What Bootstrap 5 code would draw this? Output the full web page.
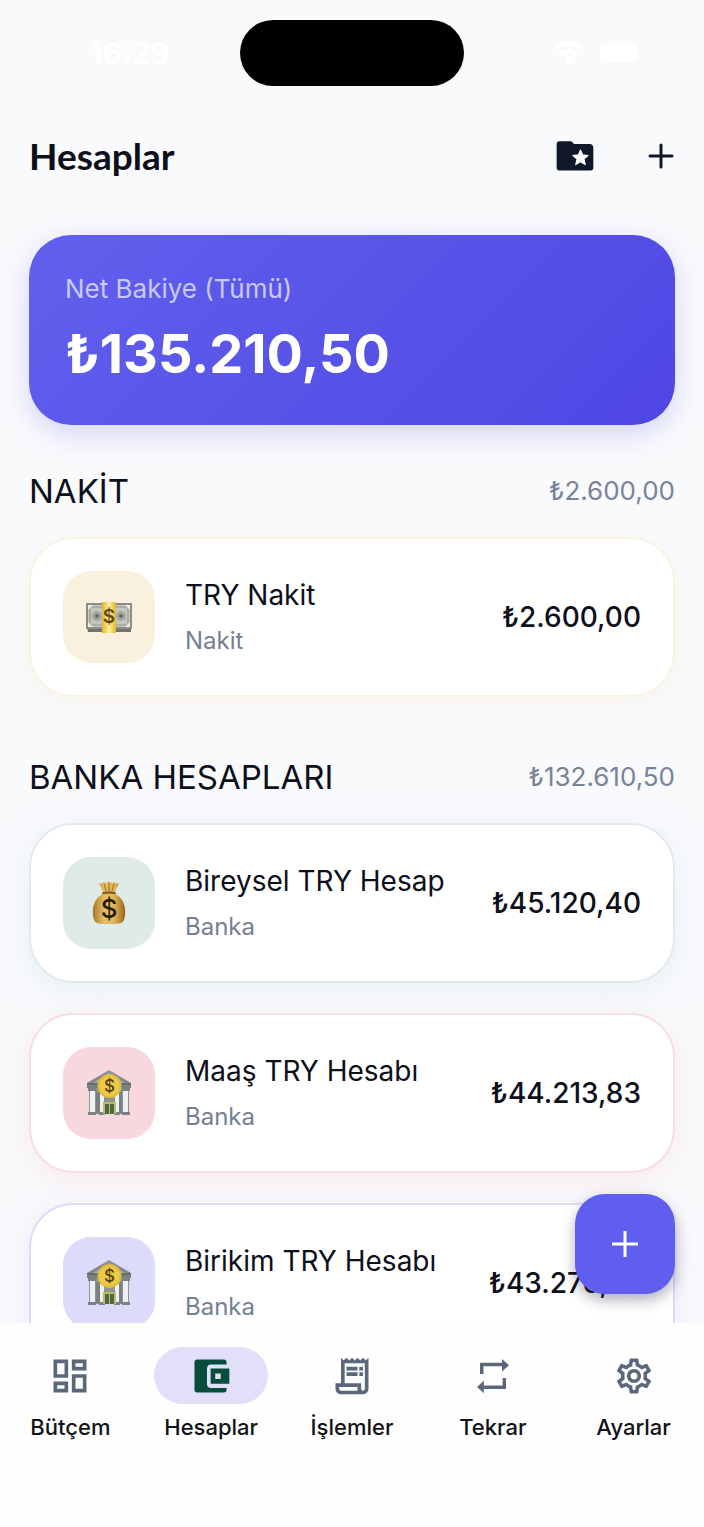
<!DOCTYPE html>
<html lang="tr">
<head>
<meta charset="utf-8">
<meta name="viewport" content="width=device-width, initial-scale=1">
<title>Hesaplar</title>
<link href="https://cdn.jsdelivr.net/npm/bootstrap@5.3.0/dist/css/bootstrap.min.css" rel="stylesheet">
<style>
  body { font-family: Inter, "Noto Sans", sans-serif; background: #f9fafc; color: #0d0f1a; }
  .screen { padding: 0 29px 29px; scrollbar-width: none; }
  .screen::-webkit-scrollbar { display: none; }

  .status-bar { padding-top: 20px; color: #fff; font-size: 30px; font-weight: 600; }
  .status-bar .side { flex: 1 1 0; padding: 0 37px; }
  .island { width: 224px; height: 66px; border-radius: 33px; background: #000; }

  .top-bar { height: 60px; margin: 40px 0 49px; }
  .top-bar h1 { font-family: Lato, sans-serif; font-size: 37px; line-height: 44px; font-weight: 700; }
  .top-actions { gap: 42px; margin-right: -8px; }
  .icon-btn { width: 44px; height: 44px; color: #0f172a; }

  .hero { height: 190px; padding: 34px 36px; border-radius: 42px; color: #fff;
    background: linear-gradient(135deg, #6161ee, #5a56e8 40%, #4f46e5);
    box-shadow: 0 8px 28px rgba(99, 102, 241, .26); }
  .hero-label { font-size: 26px; line-height: 40px; color: #c9c8f9; }
  .hero-sum { font-size: 54px; line-height: 64px; margin-top: 13px; font-weight: 700; }

  .group { margin-top: 58px; }
  .group-first { margin-top: 44px; }
  .group-head { margin-bottom: 24px; line-height: 44px; }
  .group-head h2 { font-size: 33px; line-height: 44px; font-weight: 400; }
  .group-total { font-size: 26px; color: #78839a; }

  .account { --tint: #faf3e3; --tile: #f9f1de; border: 2px solid var(--tint); border-radius: 44px;
    padding: 32px; gap: 30px; background: #fff; box-shadow: 0 8px 28px var(--glow, #f8f2e688); }
  .account-tile { width: 92px; height: 92px; border-radius: 28px; background: var(--tile); }
  .account-name { font-size: 28px; line-height: 48px; font-weight: 400; }
  .account-kind { font-size: 24px; line-height: 44px; color: #748094; }
  .account-sum { font-size: 28px; font-weight: 500; }
  .mint { --tint: #e0eaed; --tile: #dfebe9; --glow: #dcebf188; }
  .rose { --tint: #f8dde2; --tile: #f8d8dc; --glow: #f8dde288; }
  .lilac { --tint: #dcdbfa; --tile: #dddbfb; --glow: #dddcfa88; }
  .account-list { gap: 30px; }

  .fab { right: 29px; bottom: 29px; width: 100px; height: 100px; border-radius: 30px; color: #fff;
    background: #5f5eee; box-shadow: 0 6px 14px rgba(30, 30, 60, .35); }

  .tabs { background: #fefefe; padding: 24px 0 85px; }
  .tabs a { color: #111318; font-size: 22px; line-height: 30px; font-weight: 500; gap: 8px; }
  .tab-icon { width: 114px; height: 57px; border-radius: 29px; color: #5b677b; }
  .active .tab-icon { background: #e2e0f8; color: #064e3b; }
  svg { display: block; }
</style>
</head>
<body>
<svg width="0" height="0" class="position-absolute" aria-hidden="true">
  <defs>
    <linearGradient id="stone" x1="0" y1="0" x2="0" y2="1"><stop offset="0" stop-color="#8f9694"/><stop offset="1" stop-color="#767d7d"/></linearGradient>
    <linearGradient id="gold" x1="0" y1="0" x2="1" y2="0"><stop offset="0" stop-color="#a9792b"/><stop offset=".35" stop-color="#e6bd62"/><stop offset=".65" stop-color="#e2b658"/><stop offset="1" stop-color="#94651f"/></linearGradient>
    <linearGradient id="band" x1="0" y1="0" x2="1" y2="0"><stop offset="0" stop-color="#e0b52e"/><stop offset=".5" stop-color="#fff09a"/><stop offset="1" stop-color="#e0b52e"/></linearGradient>
    <symbol id="bank" viewBox="0 0 48 48">
      <path d="M24 1 2 14v5h44v-5z" fill="url(#stone)"/>
      <path d="M24 4 8 14h32z" fill="#a3aaa7"/>
      <path d="M2 14h44v2H2z" fill="#666e6e"/>
      <path d="M4 19h40v26H4z" fill="#8d9594"/>
      <path d="M11 23h4v21h-4zM33 23h4v21h-4z" fill="#798182"/>
      <path d="M5 21h5v24H5zM15 21h4v24h-4zM30 21h4v24h-4zM38 21h5v24h-5z" fill="#eef0f2"/>
      <path d="M3 19h8v3H3zM14 19h6v3h-6zM29 19h6v3h-6zM37 19h8v3h-8zM3 43h8v3H3zM14 43h6v3h-6zM29 43h6v3h-6zM37 43h8v3h-8z" fill="#7c8384"/>
      <path d="M18 33h13v12H18z" fill="#c0b96b"/>
      <path d="M20 35h4v10h-4zM25 35h4v10h-4z" fill="#4c6845"/>
      <circle cx="24.500" cy="17" r="12" fill="#e3bd38"/><circle cx="24.500" cy="17" r="10" fill="#ebca4b"/>
      <text x="24.500" y="23" text-anchor="middle" font-size="17" font-weight="500" fill="#55400f">$</text>
    </symbol>
    <symbol id="cash" viewBox="0 0 48 48">
      <path d="M2 35h44v4H3z" fill="#73736d"/>
      <path d="M1 10h46v26H1z" fill="#8c8d86"/>
      <path d="M3 12h42v22H3z" fill="#c4c5bd"/>
      <path d="M5 14h38v18H5z" fill="none" stroke="#96978e"/>
      <circle cx="12" cy="23" r="5" fill="#a5a69e"/><circle cx="12" cy="23" r="2" fill="#686961"/>
      <circle cx="36" cy="23" r="5" fill="#a5a69e"/><circle cx="36" cy="23" r="2" fill="#686961"/>
      <path d="M3 12h5l-5 5zM45 12h-5l5 5zM3 34h5l-5-5zM45 34h-5l5-5z" fill="#eeeee7"/>
      <path d="M17 9h14v31H17z" fill="url(#band)"/>
      <text x="24" y="30" text-anchor="middle" font-size="19" font-weight="600" fill="#5f4610">$</text>
    </symbol>
    <symbol id="bag" viewBox="0 0 48 48">
      <path d="M13 3q3 2 5-1 3 2 6-1 3 3 6 1 2 3 5 1-4 5-5 11 11 6 11 19 0 11-5 12-12 2-24 0-5-1-5-12 0-13 11-19-1-6-5-11z" fill="url(#gold)"/>
      <path d="M17 14q7-2 14 0" fill="none" stroke="#7b521b" stroke-width="2"/>
      <path d="m19 4 2 8m3-9v9m5-8-2 8" stroke="#92682a" fill="none"/>
      <text x="24" y="40" text-anchor="middle" font-size="27" font-weight="500" fill="#251905">$</text>
    </symbol>
  </defs>
</svg>

<div class="vh-100 d-flex flex-column">
  <div class="position-relative flex-fill overflow-hidden">
    <main class="screen h-100 overflow-auto">
      <div class="status-bar d-flex align-items-center">
        <div class="side"><span class="ps-4">16:29</span></div>
        <div class="island"></div>
        <div class="side d-flex justify-content-end align-items-center gap-3">
          <svg width="30" height="24" viewBox="0 0 30 24" fill="none" stroke="#fff" stroke-width="4" aria-hidden="true"><path d="M2 8q13-11 26 0M7 14q8-7 16 0"/><circle cx="15" cy="19" r="2" fill="#fff"/></svg>
          <svg width="38" height="18" viewBox="0 0 38 18" aria-hidden="true"><rect width="38" height="18" rx="5" fill="#fff"/></svg>
        </div>
      </div>

      <header class="top-bar d-flex align-items-center justify-content-between">
        <h1 class="m-0">Hesaplar</h1>
        <div class="top-actions d-flex">
          <button type="button" class="icon-btn btn border-0 p-0" aria-label="Favori hesaplar">
            <svg width="44" height="44" viewBox="0 0 24 24" fill="currentColor"><path d="M20 5.500h-8.500L10 4H3.500C2.600 4 2 4.600 2 5.500v13c0 .8.600 1.400 1.400 1.400h17.200c.8 0 1.400-.6 1.400-1.400V7.500c0-1.200-.8-2-2-2z"/><path fill="#fff" stroke="#fff" stroke-width=".6" stroke-linejoin="round" d="m15 8.700 1.200 2.700 3 .3-2.300 2 .7 3-2.600-1.600-2.600 1.600.7-3-2.300-2 3-.3z"/></svg>
          </button>
          <button type="button" class="icon-btn btn border-0 p-0" aria-label="Hesap ekle">
            <svg width="44" height="44" viewBox="0 0 44 44" stroke="currentColor" stroke-width="3" stroke-linecap="round"><path d="M22 11v22M11 22h22"/></svg>
          </button>
        </div>
      </header>

      <section class="hero">
        <div class="hero-label">Net Bakiye (Tümü)</div>
        <div class="hero-sum">₺135.210,50</div>
      </section>

      <section class="group group-first">
        <div class="group-head d-flex justify-content-between">
          <h2 class="m-0">NAKİT</h2><span class="group-total">₺2.600,00</span>
        </div>
        <article class="account d-flex align-items-center">
          <div class="account-tile flex-shrink-0 d-flex align-items-center justify-content-center"><svg width="48" height="48" aria-hidden="true"><use href="#cash"/></svg></div>
          <div class="flex-fill"><div class="account-name">TRY Nakit</div><div class="account-kind">Nakit</div></div>
          <div class="account-sum">₺2.600,00</div>
        </article>
      </section>

      <section class="group">
        <div class="group-head d-flex justify-content-between">
          <h2 class="m-0">BANKA HESAPLARI</h2><span class="group-total">₺132.610,50</span>
        </div>
        <div class="account-list d-flex flex-column">
          <article class="account mint d-flex align-items-center">
            <div class="account-tile flex-shrink-0 d-flex align-items-center justify-content-center"><svg width="46" height="46" aria-hidden="true"><use href="#bag"/></svg></div>
            <div class="flex-fill"><div class="account-name">Bireysel TRY Hesap</div><div class="account-kind">Banka</div></div>
            <div class="account-sum">₺45.120,40</div>
          </article>
          <article class="account rose d-flex align-items-center">
            <div class="account-tile flex-shrink-0 d-flex align-items-center justify-content-center"><svg width="48" height="48" aria-hidden="true"><use href="#bank"/></svg></div>
            <div class="flex-fill"><div class="account-name">Maaş TRY Hesabı</div><div class="account-kind">Banka</div></div>
            <div class="account-sum">₺44.213,83</div>
          </article>
          <article class="account lilac d-flex align-items-center">
            <div class="account-tile flex-shrink-0 d-flex align-items-center justify-content-center"><svg width="48" height="48" aria-hidden="true"><use href="#bank"/></svg></div>
            <div class="flex-fill"><div class="account-name">Birikim TRY Hesabı</div><div class="account-kind">Banka</div></div>
            <div class="account-sum">₺43.276,27</div>
          </article>
        </div>
      </section>
    </main>
    <button type="button" class="fab btn border-0 p-0 position-absolute d-flex align-items-center justify-content-center" aria-label="Yeni işlem">
      <svg width="44" height="44" viewBox="0 0 44 44" stroke="currentColor" stroke-width="3"><path d="M22 9v26M9 22h26"/></svg>
    </button>
  </div>

  <nav class="tabs d-flex flex-shrink-0" aria-label="Ana menü">
    <a href="#butcem" class="col d-flex flex-column align-items-center text-decoration-none">
      <span class="tab-icon d-flex align-items-center justify-content-center"><svg width="44" height="44" viewBox="0 0 24 24" fill="currentColor"><path d="M19 5v2h-4V5h4M9 5v6H5V5h4m10 8v6h-4v-6h4M9 17v2H5v-2h4M21 3h-8v6h8V3zM11 3H3v10h8V3zm10 8h-8v10h8V11zm-10 4H3v6h8v-6z"/></svg></span>
      Bütçem
    </a>
    <a href="#hesaplar" class="active col d-flex flex-column align-items-center text-decoration-none" aria-current="page">
      <span class="tab-icon d-flex align-items-center justify-content-center"><svg width="44" height="44" viewBox="0 0 24 24" fill="currentColor" fill-rule="evenodd"><path d="M20.500 18.500v1c0 .9-.6 1.500-1.500 1.500H4.500C3.600 21 3 20.400 3 19.500v-15C3 3.600 3.600 3 4.500 3H19c.9 0 1.500.6 1.500 1.500v1.200H12c-1.300 0-2.200.9-2.200 2.200v8.400c0 1.300.9 2.200 2.200 2.200zM11.800 16.200H22V7.900H11.800zm2.500-5.600h3v3h-3z"/></svg></span>
      Hesaplar
    </a>
    <a href="#islemler" class="col d-flex flex-column align-items-center text-decoration-none">
      <span class="tab-icon d-flex align-items-center justify-content-center"><svg width="44" height="44" viewBox="0 0 24 24" fill="currentColor"><path d="M19.500 3.500 18 2l-1.500 1.500L15 2l-1.500 1.500L12 2l-1.500 1.500L9 2 7.500 3.500 6 2v14H3v3c0 1.660 1.340 3 3 3h12c1.660 0 3-1.340 3-3V2l-1.500 1.500zM15 20H6c-.55 0-1-.45-1-1v-1h10v2zm4-1c0 .55-.45 1-1 1s-1-.45-1-1v-3H8V5h11v14z"/><path d="M9 7h6v2H9zM16 7h2v2h-2zM9 10h6v2H9zM16 10h2v2h-2z"/></svg></span>
      İşlemler
    </a>
    <a href="#tekrar" class="col d-flex flex-column align-items-center text-decoration-none">
      <span class="tab-icon d-flex align-items-center justify-content-center"><svg width="44" height="44" viewBox="0 0 44 44" fill="currentColor"><path d="M9 20V8.800h22V5l7 6.200-7 6.300v-5.300H12.500V20zM35 24v11H12.800v4.200L6 33l6.800-6.300v4.800h18.800V24z"/></svg></span>
      Tekrar
    </a>
    <a href="#ayarlar" class="col d-flex flex-column align-items-center text-decoration-none">
      <span class="tab-icon d-flex align-items-center justify-content-center"><svg width="42" height="42" viewBox="0 0 24 24" fill="currentColor"><path d="M19.430 12.980c.04-.32.07-.64.07-.98 0-.34-.03-.66-.07-.98l2.110-1.650c.19-.15.24-.42.12-.64l-2-3.460c-.09-.16-.26-.25-.44-.25-.06 0-.12.010-.17.030l-2.490 1c-.52-.4-1.080-.73-1.690-.98l-.38-2.650C14.460 2.180 14.250 2 14 2h-4c-.25 0-.46.18-.49.42l-.38 2.650c-.61.25-1.170.59-1.690.98l-2.490-1c-.06-.02-.12-.03-.18-.03-.17 0-.34.09-.43.25l-2 3.460c-.13.22-.07.49.12.64l2.110 1.650c-.04.32-.07.65-.07.98 0 .33.03.66.07.98l-2.110 1.650c-.19.15-.24.42-.12.64l2 3.460c.09.16.26.25.44.25.06 0 .12-.01.17-.03l2.490-1c.52.4 1.080.73 1.690.98l.38 2.650c.03.24.24.42.49.42h4c.25 0 .46-.18.49-.42l.38-2.650c.61-.25 1.170-.59 1.690-.98l2.490 1c.06.02.12.03.18.03.17 0 .34-.09.43-.25l2-3.460c.12-.22.07-.49-.12-.64l-2.110-1.650zm-1.980-1.710c.04.31.05.52.05.73 0 .21-.02.43-.05.73l-.14 1.130.89.7 1.080.84-.7 1.210-1.270-.51-1.040-.42-.9.68c-.43.32-.84.56-1.250.73l-1.060.43-.16 1.130-.2 1.350h-1.400l-.19-1.350-.16-1.130-1.060-.43c-.43-.18-.83-.41-1.230-.71l-.91-.7-1.060.43-1.270.51-.7-1.210 1.080-.84.89-.7-.14-1.130c-.03-.31-.05-.54-.05-.74s.02-.43.05-.73l.14-1.130-.89-.7-1.080-.84.7-1.210 1.270.51 1.040.42.9-.68c.43-.32.84-.56 1.250-.73l1.060-.43.16-1.130.2-1.350h1.390l.19 1.350.16 1.130 1.060.43c.43.18.83.41 1.230.71l.91.7 1.060-.43 1.270-.51.7 1.210-1.070.85-.89.7.14 1.130zM12 8c-2.210 0-4 1.790-4 4s1.790 4 4 4 4-1.790 4-4-1.790-4-4-4zm0 6c-1.100 0-2-.9-2-2s.9-2 2-2 2 .9 2 2-.9 2-2 2z"/></svg></span>
      Ayarlar
    </a>
  </nav>
</div>
<script src="https://cdn.jsdelivr.net/npm/bootstrap@5.3.0/dist/js/bootstrap.bundle.min.js"></script>
</body>
</html>
